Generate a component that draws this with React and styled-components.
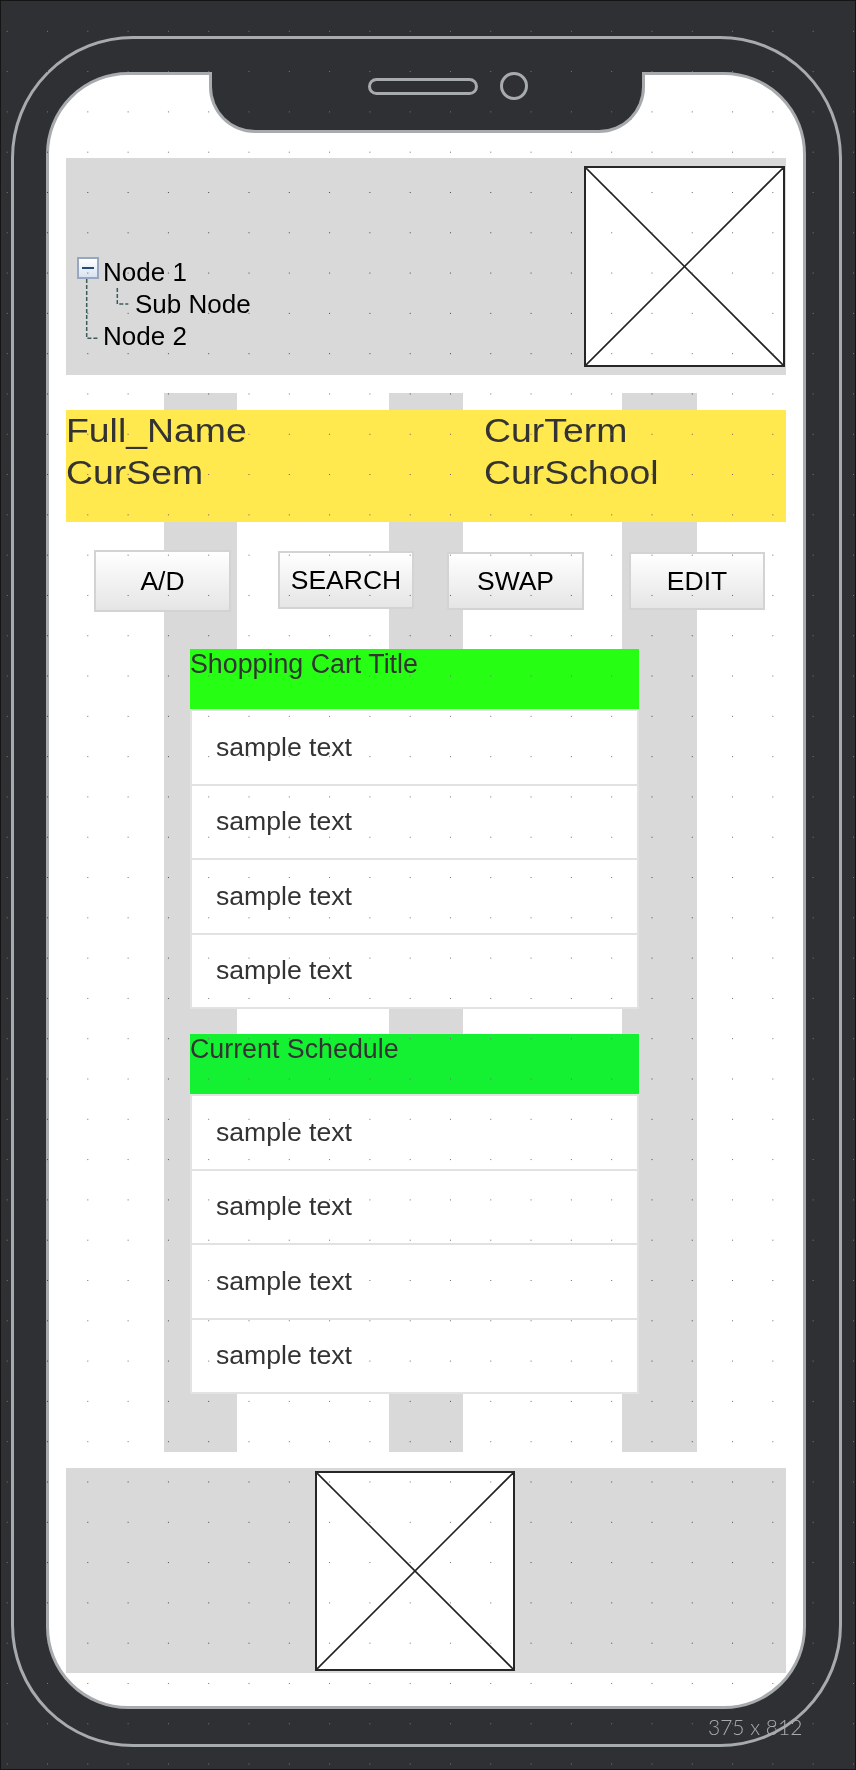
import React from "react";
import styled, { createGlobalStyle } from "styled-components";

const GlobalStyle = createGlobalStyle`
  html, body { margin: 0; padding: 0; background: #2f3034; }
  body { font-family: "Liberation Sans", Arial, sans-serif; }
  * { box-sizing: border-box; }
`;

const Page = styled.div`
  position: relative;
  width: 856px;
  height: 1770px;
  border: 1px solid #151515;
  background: #2f3034;
  padding: 35px 0 0 10px;
  overflow: hidden;
`;

const Dots = styled.div`
  position: absolute;
  inset: 0;
  pointer-events: none;
  background-image: radial-gradient(circle at center, rgba(200, 200, 200, 0.75) 0.45px, transparent 0.95px);
  background-size: 40.3px 40.3px;
  background-position: -13.95px 10.15px;
  mix-blend-mode: difference;
`;

const Phone = styled.div`
  width: 831px;
  height: 1711px;
  border: 3px solid #a7abae;
  border-radius: 122px;
  padding: 33px 33px 35px 32px;
`;

const Screen = styled.div`
  position: relative;
  height: 100%;
  border: 3px solid #a7abae;
  border-radius: 82px;
  background: #fff;
  padding: 83px 17px 0 17px;
`;

const Notch = styled.div`
  position: absolute;
  top: -3px;
  left: 160px;
  width: 436px;
  height: 61px;
  background: #2f3034;
  border: 3px solid #a7abae;
  border-top: 0;
  border-radius: 0 0 46px 46px;
`;

const SensorRow = styled.div`
  display: flex;
  align-items: center;
  gap: 22px;
  height: 28px;
  margin-left: 156px;
`;

const Speaker = styled.div`
  width: 110px;
  height: 17px;
  border: 3px solid #a7abae;
  border-radius: 9px;
`;

const Camera = styled.div`
  width: 28px;
  height: 28px;
  border: 3px solid #a7abae;
  border-radius: 50%;
`;

const HeaderPanel = styled.div`
  display: flex;
  justify-content: space-between;
  align-items: center;
  height: 217px;
  background: #d9d9d9;
  padding: 0 1px 0 11px;
`;

const Tree = styled.div`
  position: relative;
  align-self: flex-end;
  margin-bottom: 23px;
  font-size: 26px;
  color: #000;
`;

const TreeRow = styled.div`
  display: flex;
  align-items: flex-start;
  height: 32px;
  line-height: 32px;
  padding-left: ${(p) => p.$indent}px;
  white-space: nowrap;
`;

const Toggle = styled.span`
  position: relative;
  display: block;
  width: 22px;
  height: 22px;
  margin-top: 1px;
  margin-right: 4px;
  border: 2px solid #95a8c0;
  background: linear-gradient(#ffffff, #d8e3f0);
  &::after {
    content: "";
    position: absolute;
    left: 3px;
    right: 3px;
    top: 7.5px;
    height: 2.5px;
    background: #23497d;
  }
`;

const TreeLines = styled.svg`
  position: absolute;
  left: 0;
  top: 0;
  width: 60px;
  height: 96px;
  overflow: visible;
  pointer-events: none;
`;

const ImageBox = styled.div`
  width: ${(p) => p.$size}px;
  height: ${(p) => p.$size}px;
  margin-left: ${(p) => p.$offset || 0}px;
  border: 2px solid #262626;
  background: #fff;
  svg { display: block; width: 100%; height: 100%; }
`;

const Body = styled.section`
  margin-top: 18px;
  height: 1059px;
  padding-top: 17px;
  background-image: linear-gradient(#d9d9d9, #d9d9d9), linear-gradient(#d9d9d9, #d9d9d9),
    linear-gradient(#d9d9d9, #d9d9d9);
  background-size: 73px 100%, 74px 100%, 75px 100%;
  background-position: 98px 0, 323px 0, 556px 0;
  background-repeat: no-repeat;
`;

const InfoPanel = styled.div`
  display: grid;
  grid-template-columns: 418px 1fr;
  height: 112px;
  padding-top: 1px;
  background: #ffe94e;
  color: #333;
  font-size: 32.5px;
  line-height: 41.7px;
`;

const InfoCol = styled.div`
  display: flex;
  flex-direction: column;
  align-items: flex-start;
`;

const InfoText = styled.span`
  display: inline-block;
  transform: scaleX(1.15);
  transform-origin: left center;
  white-space: nowrap;
`;

const ButtonRow = styled.div`
  display: flex;
  align-items: flex-start;
  height: 62px;
  margin-top: 28px;
  padding-left: 28px;
`;

const Button = styled.button`
  width: ${(p) => p.$w}px;
  height: ${(p) => p.$h}px;
  margin-left: ${(p) => p.$dx}px;
  margin-top: ${(p) => p.$dy}px;
  padding: 0;
  border: 2px solid #d3d3d3;
  background: linear-gradient(#ffffff, #e5e5e5);
  font-family: "Liberation Sans", Arial, sans-serif;
  font-size: 26.5px;
  color: #000;
  display: flex;
  align-items: center;
  justify-content: center;
`;

const ListCard = styled.div`
  width: 449px;
  margin-left: 124px;
  margin-top: ${(p) => p.$gap}px;
`;

const ListHeader = styled.div`
  height: 60px;
  background: ${(p) => p.$color};
  color: #333;
  font-size: 26.8px;
  line-height: normal;
  white-space: nowrap;
`;

const ListBody = styled.div`
  border-top: 2px solid #e2e2e2;
`;

const ListRow = styled.div`
  display: flex;
  align-items: center;
  height: 74.5px;
  padding-left: 24px;
  background: #fff;
  border: 2px solid #e2e2e2;
  border-top: 0;
  color: #333;
  font-size: 26.6px;
`;

const Footer = styled.div`
  display: flex;
  align-items: center;
  height: 205px;
  margin-top: 16px;
  background: #d9d9d9;
`;

const SizeLabel = styled.div`
  position: absolute;
  left: 707px;
  top: 1715px;
  font-family: Lato, "Open Sans", sans-serif;
  font-weight: 300;
  font-size: 21px;
  line-height: 1;
  color: #a7abae;
  white-space: nowrap;
`;

const Cross = () => (
  <svg viewBox="0 0 100 100" preserveAspectRatio="none">
    <line x1="0" y1="0" x2="100" y2="100" stroke="#222" strokeWidth="1.6" vectorEffect="non-scaling-stroke" />
    <line x1="100" y1="0" x2="0" y2="100" stroke="#222" strokeWidth="1.6" vectorEffect="non-scaling-stroke" />
  </svg>
);

const rows = ["sample text", "sample text", "sample text", "sample text"];

const List = ({ title, color, gap }) => (
  <ListCard $gap={gap}>
    <ListHeader $color={color}>{title}</ListHeader>
    <ListBody>
      {rows.map((r, i) => (
        <ListRow key={i}>{r}</ListRow>
      ))}
    </ListBody>
  </ListCard>
);

export default function App() {
  return (
    <>
      <GlobalStyle />
      <Page>
        <Phone>
          <Screen>
            <Notch>
              <SensorRow>
                <Speaker />
                <Camera />
              </SensorRow>
            </Notch>

            <HeaderPanel>
              <Tree>
                <TreeLines viewBox="0 0 60 96">
                  <path d="M9.7 23 V82.3 H21.3" fill="none" stroke="#3b5b5b" strokeWidth="1.5" strokeDasharray="4 2" />
                  <path d="M40.3 32 V48 H51.3" fill="none" stroke="#3b5b5b" strokeWidth="1.5" strokeDasharray="4 2" />
                </TreeLines>
                <TreeRow $indent={0}>
                  <Toggle />
                  <span>Node 1</span>
                </TreeRow>
                <TreeRow $indent={58}>Sub Node</TreeRow>
                <TreeRow $indent={26}>Node 2</TreeRow>
              </Tree>
              <ImageBox $size={201}>
                <Cross />
              </ImageBox>
            </HeaderPanel>

            <Body>
              <InfoPanel>
                <InfoCol>
                  <InfoText>Full_Name</InfoText>
                  <InfoText>CurSem</InfoText>
                </InfoCol>
                <InfoCol>
                  <InfoText>CurTerm</InfoText>
                  <InfoText>CurSchool</InfoText>
                </InfoCol>
              </InfoPanel>

              <ButtonRow>
                <Button $w={137} $h={62} $dx={0} $dy={0}>A/D</Button>
                <Button $w={136} $h={58} $dx={47} $dy={1}>SEARCH</Button>
                <Button $w={137} $h={58} $dx={33} $dy={2}>SWAP</Button>
                <Button $w={136} $h={58} $dx={45} $dy={2}>EDIT</Button>
              </ButtonRow>

              <List title="Shopping Cart Title" color="#26ff13" gap={37} />
              <List title="Current Schedule" color="#13f132" gap={25} />
            </Body>

            <Footer>
              <ImageBox $size={200} $offset={249}>
                <Cross />
              </ImageBox>
            </Footer>
          </Screen>
        </Phone>
        <SizeLabel>375 x 812</SizeLabel>
        <Dots />
      </Page>
    </>
  );
}
